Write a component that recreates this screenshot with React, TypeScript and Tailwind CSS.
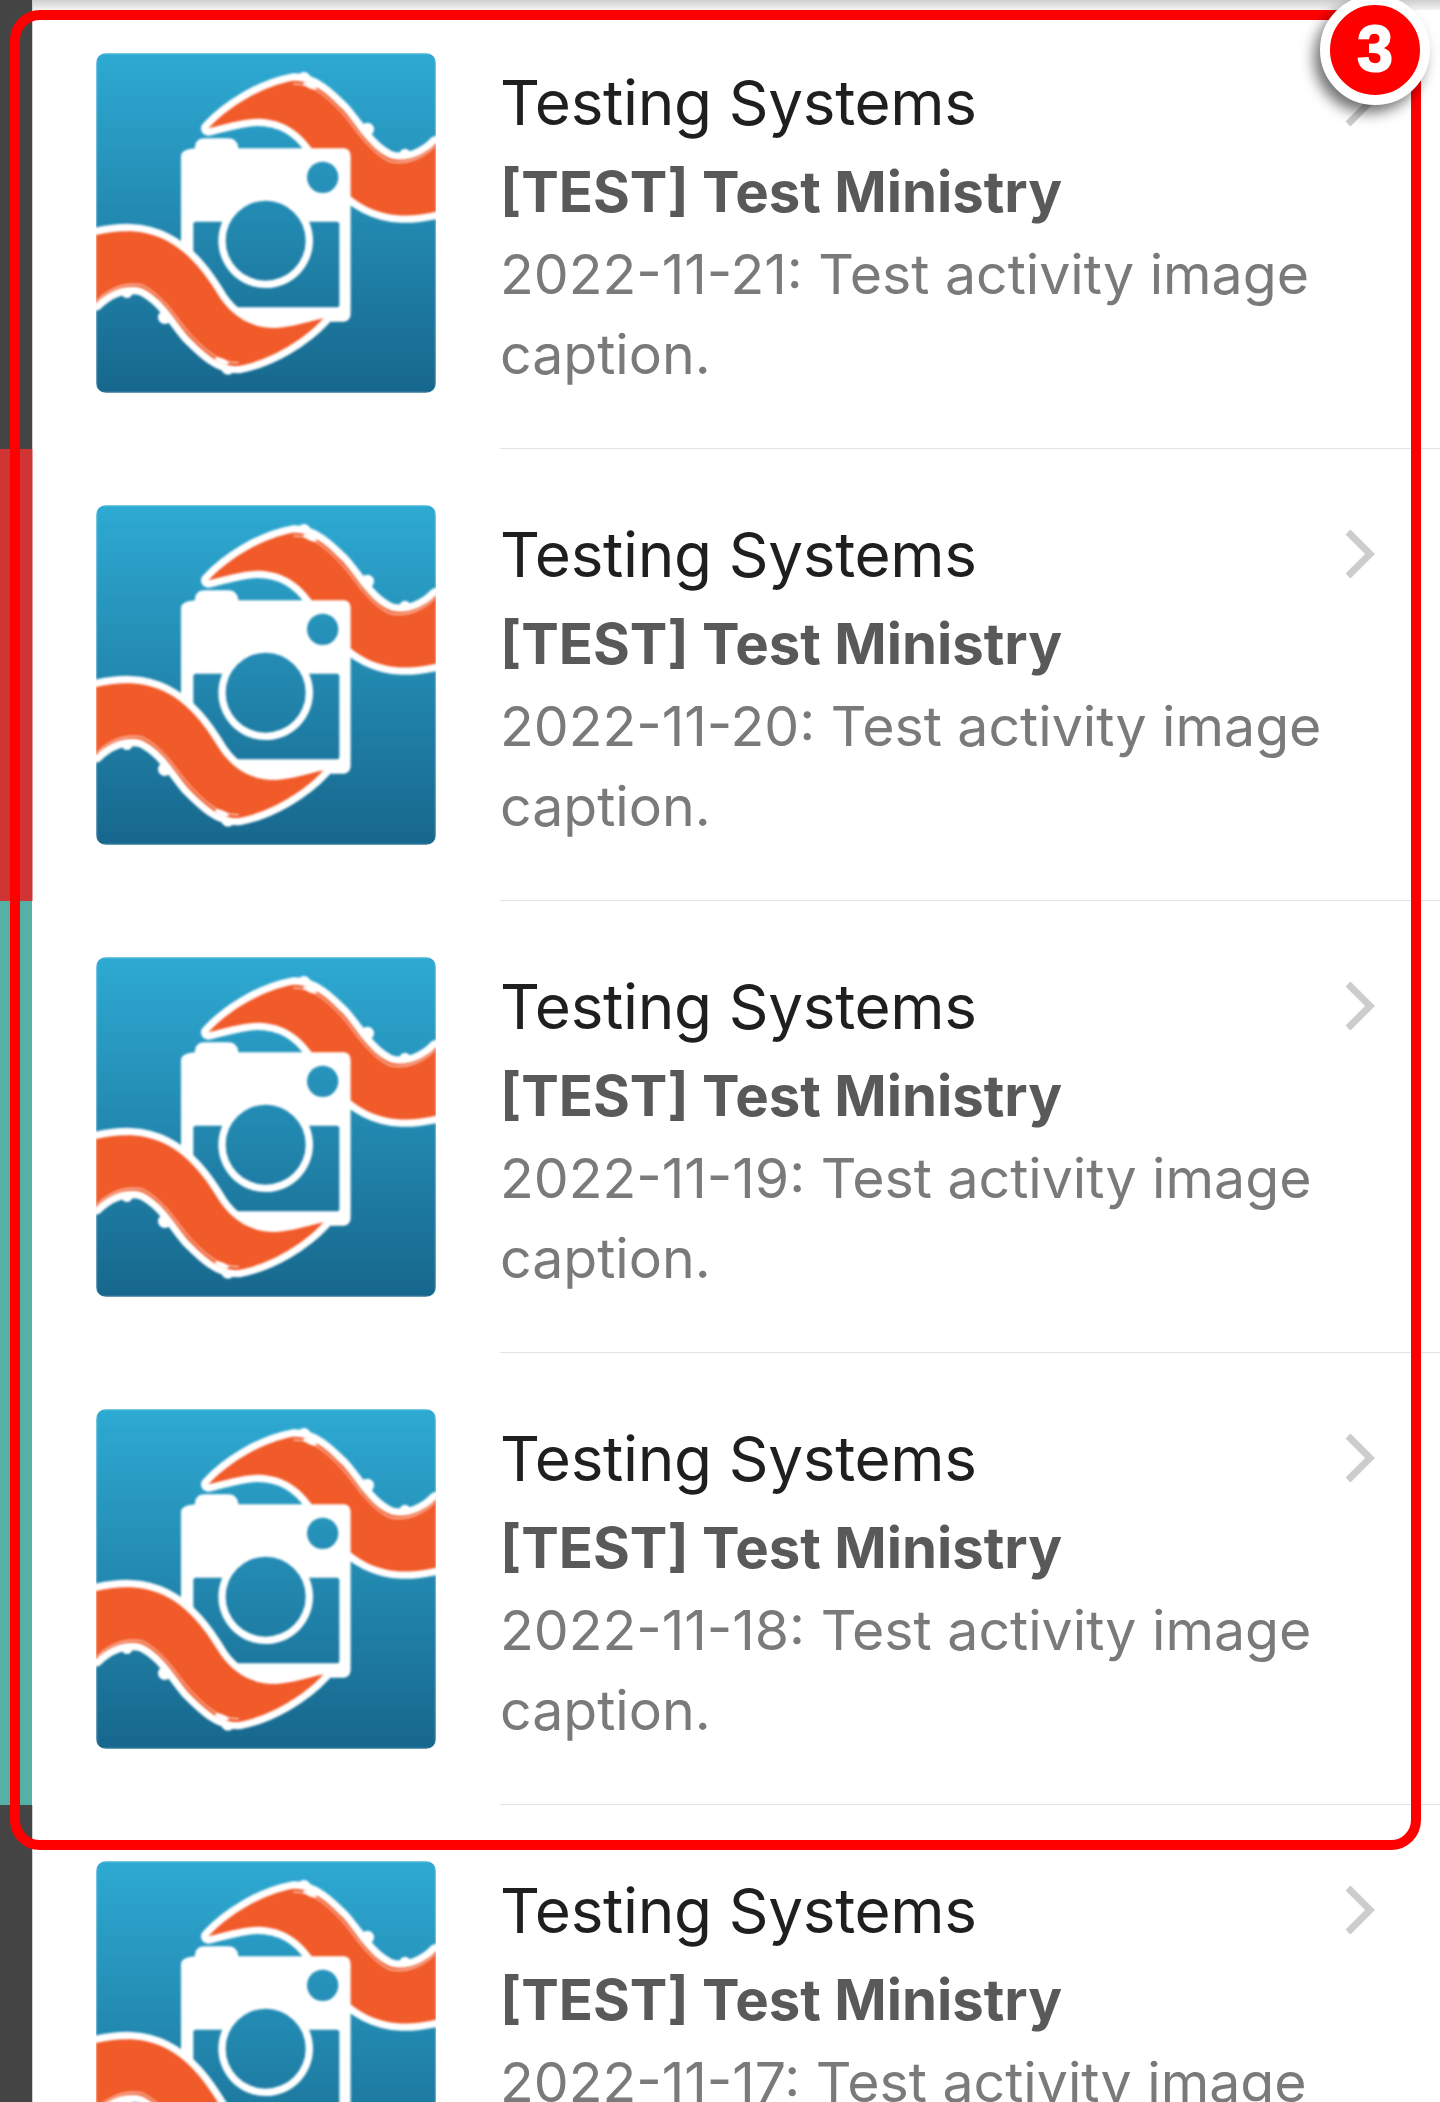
const rows = ['2022-11-21', '2022-11-20', '2022-11-19', '2022-11-18', '2022-11-17'];

function Logo({ id }: { id: string }) {
  const tentacle =
    'M385 295C440 235 540 170 640 152C700 150 745 195 790 240C830 285 865 355 930 385C980 400 1035 375 1068 340L1068 545C1000 560 930 565 860 530C790 495 740 430 695 355C650 290 590 265 530 266C480 268 430 285 385 295Z';
  const tentacleParts = (
    <>
      <path d={tentacle} fill="#fff" stroke="#fff" strokeWidth="44" strokeLinejoin="round" />
      <circle cx="672" cy="146" r="20" fill="#fff" />
      <circle cx="862" cy="298" r="20" fill="#fff" />
      <circle cx="975" cy="372" r="16" fill="#fff" />
      <path d={tentacle} fill="#f15a29" />
      <path d="M640 162C700 160 742 203 786 248C826 292 862 362 928 394C978 406 1030 384 1064 350" fill="none" stroke="#fff" strokeWidth="3" />
      <ellipse cx="690" cy="168" rx="22" ry="7" fill="#fff" transform="rotate(22 690 168)" />
      <ellipse cx="866" cy="318" rx="8" ry="16" fill="#fff" transform="rotate(-35 866 318)" />
      <ellipse cx="968" cy="372" rx="14" ry="6" fill="#fff" />
    </>
  );
  return (
    <div className="h-[340px] w-[340px] shrink-0 overflow-hidden rounded-[10px]">
      <svg viewBox="48 69 1020 1020" className="h-full w-full blur-[0.8px]">
        <defs>
          <linearGradient id={id} gradientUnits="userSpaceOnUse" x1="0" y1="69" x2="0" y2="1089">
            <stop offset="0" stopColor="#2eaad3" />
            <stop offset="1" stopColor="#17678d" />
          </linearGradient>
        </defs>
        <rect x="48" y="69" width="1020" height="1020" fill={`url(#${id})`} />
        <g>{tentacleParts}</g>
        <path d="M345 355C345 335 355 325 375 325L445 325C465 325 475 340 475 355L790 355C805 355 812 365 812 380L812 850C812 865 805 875 790 875L325 875C310 875 303 865 303 850L303 380C303 365 315 358 345 355Z" fill="#fff" />
        <rect x="340" y="575" width="438" height="257" rx="8" fill={`url(#${id})`} />
        <circle cx="557" cy="632" r="142" fill="#fff" />
        <circle cx="557" cy="632" r="120" fill={`url(#${id})`} />
        <circle cx="728" cy="442" r="47" fill={`url(#${id})`} />
        <g transform="rotate(180 558 580)">{tentacleParts}</g>
      </svg>
    </div>
  );
}

function Row({ date, index }: { date: string; index: number }) {
  return (
    <div className="flex h-[452px] items-start pl-[63px]">
      <div className="pt-[56px]">
        <Logo id={`logo-grad-${index}`} />
      </div>
      <div className="ml-[64px] flex h-full min-w-0 flex-1 border-b border-[#e4e4e6] pt-[71px]">
        <div className="w-[842px] shrink-0">
          <div className="text-[62px] leading-[70px] tracking-[-0.33px] text-[#1f1f1f]">Testing Systems</div>
          <div className="mt-[16px] text-[56.3px] leading-[76px] font-bold text-[#595959]">[TEST] Test Ministry</div>
          <div className="mt-[4px] text-[55.4px] leading-[80px] text-[#7a7a7a]">
            {date}: Test activity image caption.
          </div>
        </div>
        <svg viewBox="0 0 36 54" className="mt-[7px] ml-[1px] h-[54px] w-[36px] shrink-0" fill="none" stroke="#cccccc" strokeWidth="7">
          <path d="M5 5L27 27L5 49" />
        </svg>
      </div>
    </div>
  );
}

export default function App() {
  return (
    <div className="relative flex h-[2102px] w-[1440px] overflow-hidden bg-white font-['Inter',sans-serif]">
      <div className="flex w-[33px] shrink-0 flex-col">
        <div className="h-[449px] border-r border-[#cfcfcf] bg-[#444444]" />
        <div className="h-[452px] border-r border-[#e79a9a] bg-[#cf3535]" />
        <div className="h-[904px] border-r border-white bg-[#55b0a5]" />
        <div className="flex-1 border-r border-[#cfcfcf] bg-[#444444]" />
      </div>
      <div className="-mt-[3px] min-w-0 flex-1">
        {rows.map((date, i) => (
          <Row key={date} date={date} index={i} />
        ))}
      </div>
      {/* top edge shade */}
      <div className="absolute top-0 right-0 left-[33px] h-[10px] bg-gradient-to-b from-[#cfcfcf] to-[#f4f4f4]" />
      {/* highlight frame and badge */}
      <div className="absolute top-[10px] left-[10px] h-[1840px] w-[1411px] rounded-[30px] border-[10px] border-[#ff0000]" />
      <div className="absolute -top-[5px] left-[1320px] flex h-[110px] w-[110px] items-center justify-center rounded-full border-[10px] border-white bg-[#ff0000] pb-[2px] font-['Liberation_Sans',sans-serif] text-[64px] leading-none font-bold text-white shadow-[-6px_8px_14px_rgba(0,0,0,0.55)] [-webkit-text-stroke:2px_white]">
        3
      </div>
    </div>
  );
}
